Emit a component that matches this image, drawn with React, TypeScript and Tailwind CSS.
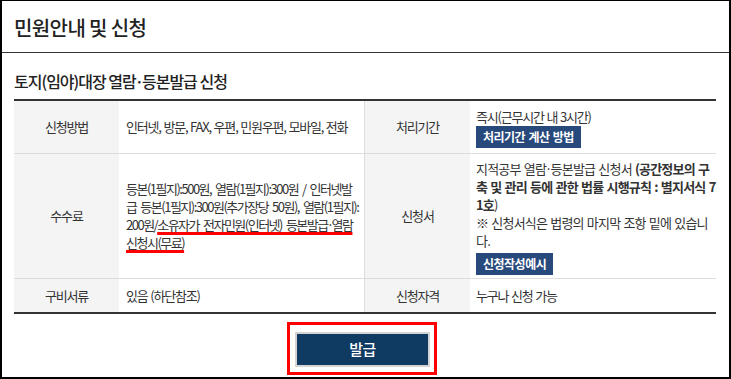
const font = "font-['Noto_Sans_CJK_KR','Noto_Sans',sans-serif]";

function Dot() {
  return <span className="mx-[-1px]">·</span>;
}

function BlueButton({ children }: { children: React.ReactNode }) {
  return (
    <div className="inline-flex h-[22px] items-center bg-[#27497c] px-[7px] text-[12px] font-bold tracking-[-0.5px] text-white [word-spacing:1px]">
      {children}
    </div>
  );
}

export default function App() {
  return (
    <div
      className={`${font} box-border h-[379px] w-[731px] overflow-hidden border-x-2 border-t border-b-2 border-black bg-white text-[#333]`}
    >
      <div className="border-b border-[#333] pl-[12px] pt-[13px] pb-[10px]">
        <h1 className="h-[28px] text-[20px] leading-[28px] font-medium tracking-[-0.6px] text-[#222]">
          민원안내 및 신청
        </h1>
      </div>

      <div className="pl-[12px] pr-[13px]">
        <h2 className="mt-[17px] mb-[7px] h-[22px] text-[16px] leading-[22px] font-medium tracking-[-1px] text-[#222]">
          토지(임야)대장 열람<Dot />등본발급 신청
        </h2>

        <div className="grid grid-cols-[105px_245px_106px_246px] border-t-2 border-b-2 border-[#333] text-[13px] leading-[18px] tracking-[-1.2px] [word-spacing:1px]">
          {/* row 1 */}
          <div className="contents">
            <div className="flex h-[53px] items-center justify-center border-b border-[#ddd] bg-[#f4f4f4]">신청방법</div>
            <div className="flex h-[53px] items-center border-b border-[#ddd] pl-[7px]">
              인터넷, 방문, FAX, 우편, 민원우편, 모바일, 전화
            </div>
            <div className="flex h-[53px] items-center justify-center border-b border-l border-[#ddd] bg-[#f4f4f4]">
              처리기간
            </div>
            <div className="flex h-[53px] flex-col items-start border-b border-[#ddd] pt-[6px] pl-[6px]">
              <span className="h-[19px] leading-[19px]">즉시(근무시간 내 3시간)</span>
              <BlueButton>처리기간 계산 방법</BlueButton>
            </div>
          </div>

          {/* row 2 */}
          <div className="contents">
            <div className="flex h-[125px] items-center justify-center border-b border-[#ddd] bg-[#f4f4f4]">수수료</div>
            <div className="flex h-[125px] items-center border-b border-[#ddd] pl-[7px]">
              <p className="tracking-[-1.5px] [word-spacing:2.5px]">
                등본(1필지):500원, 열람(1필지):300원 / 인터넷발
                <br />
                급 등본(1필지):300원(추가장당 50원), 열람(1필지):
                <br />
                200원/
                <span className="underline decoration-[#ff0000] decoration-[3px] underline-offset-[2px] [text-decoration-skip-ink:none]">
                  소유자가 전자민원(인터넷) 등본발급<Dot />열람
                  <br />
                  신청시(무료)
                </span>
              </p>
            </div>
            <div className="flex h-[125px] items-center justify-center border-b border-l border-[#ddd] bg-[#f4f4f4]">
              신청서
            </div>
            <div className="flex h-[125px] flex-col items-start border-b border-[#ddd] pt-[6px] pl-[6px]">
              <p className="tracking-[-0.8px]">
                지적공부 열람<Dot />등본발급 신청서 <b className="font-bold">(공간정보의 구</b>
                <br />
                <b className="font-bold">축 및 관리 등에 관한 법률 시행규칙 : 별지서식 7</b>
                <br />
                <b className="font-semibold">1호</b>)
                <br />
                ※ 신청서식은 법령의 마지막 조항 밑에 있습니
                <br />
                다.
              </p>
              <div className="mt-[3px]">
                <BlueButton>신청작성예시</BlueButton>
              </div>
            </div>
          </div>

          {/* row 3 */}
          <div className="contents">
            <div className="flex h-[33px] items-center justify-center bg-[#f4f4f4]">구비서류</div>
            <div className="flex h-[33px] items-center pl-[7px]">있음 (하단참조)</div>
            <div className="flex h-[33px] items-center justify-center border-l border-[#ddd] bg-[#f4f4f4]">
              신청자격
            </div>
            <div className="flex h-[33px] items-center pl-[6px]">누구나 신청 가능</div>
          </div>
        </div>

        <div className="mt-[8px] flex justify-center pr-[6px]">
          <div className="border-[3px] border-[#ff0000] px-[5px] py-[7px] pb-[5px] pr-[4px]">
            <button className="flex h-[35px] w-[135px] items-center justify-center border-2 border-[#d4d4d4] bg-[#0f3a62] text-[15px] font-medium tracking-[-0.5px] text-white">
              발급
            </button>
          </div>
        </div>
      </div>
    </div>
  );
}
